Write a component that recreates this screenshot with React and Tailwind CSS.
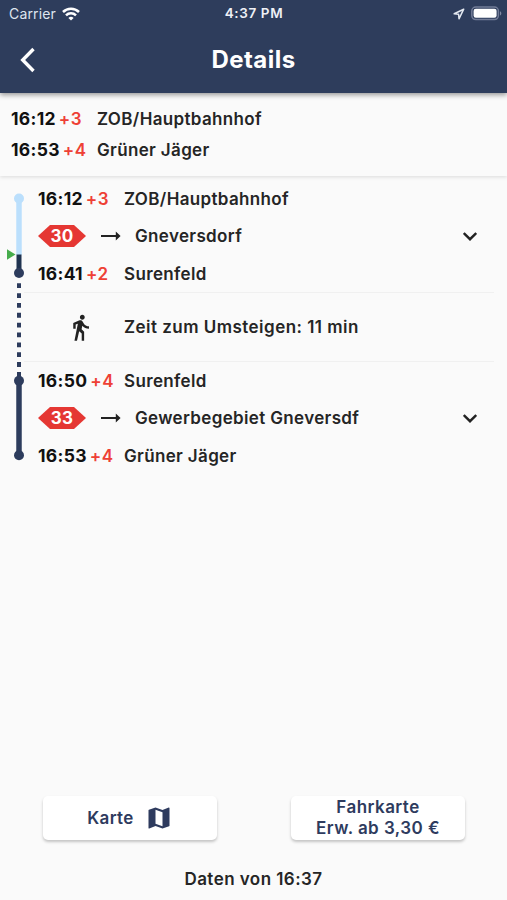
import { MdDirectionsWalk, MdMap } from "react-icons/md";

const legs = [
  {
    line: "30",
    direction: "Gneversdorf",
    from: { time: "16:12", delay: "+3", name: "ZOB/Hauptbahnhof" },
    to: { time: "16:41", delay: "+2", name: "Surenfeld" },
  },
  {
    line: "33",
    direction: "Gewerbegebiet Gneversdf",
    from: { time: "16:50", delay: "+4", name: "Surenfeld" },
    to: { time: "16:53", delay: "+4", name: "Grüner Jäger" },
  },
];

function StatusBar() {
  return (
    <div className="grid h-[27px] grid-cols-3 items-center pr-[5px] pl-[9px] text-[13px] leading-none">
      <div className="flex items-center gap-[6px] text-[#dfe5ef]">
        <span className="text-[14px] tracking-[0.15px]">Carrier</span>
        <svg width="18" height="14" viewBox="0 0 18 14" fill="none" stroke="#fff" strokeWidth="2.5">
          <path d="M1 5a11.4 11.4 0 0 1 16 0" />
          <path d="M4 8.4a7.1 7.1 0 0 1 10 0" />
          <path d="M9 13.6 6.4 10.9a3.8 3.8 0 0 1 5.2 0z" fill="#fff" stroke="none" />
        </svg>
      </div>
      <span className="pr-[3px] text-center text-[13.5px] font-semibold tracking-[0.6px] whitespace-nowrap text-[#eef1f6]">
        4:37 PM
      </span>
      <div className="flex items-center justify-end gap-[6px]">
        <svg width="12" height="12" viewBox="0 0 12 12" fill="none" stroke="#e3e8f0" strokeWidth="1.5" strokeLinejoin="round">
          <path d="M10.7 1.2 1.2 5.8l4.4.5.4 4.5z" />
        </svg>
        <svg width="31" height="15" viewBox="0 0 31 15">
          <rect x="0.8" y="1" width="26.6" height="12.6" rx="4" fill="none" stroke="#727c97" strokeWidth="1.5" />
          <rect x="2.6" y="2.8" width="23" height="9" rx="2.2" fill="#fff" />
          <path d="M29 5.2c1.8.7 1.8 3.6 0 4.300z" fill="#828ba3" />
        </svg>
      </div>
    </div>
  );
}

function Stop({ time, delay, name }) {
  return (
    <>
      <div className="flex w-[86px] shrink-0 items-baseline gap-[3px]">
        <span className="text-[17.5px] font-bold tracking-[0.3px] text-[#111]">{time}</span>
        <span className="tracking-[0.5px] text-[#ee4035]">{delay}</span>
      </div>
      <span>{name}</span>
    </>
  );
}

function Leg({ leg }) {
  return (
    <div>
      <div className="flex h-[37px] items-center pt-px">
        <Stop {...leg.from} />
      </div>
      <div className="flex h-[38px] items-center">
        <div className="flex h-[22px] w-[48px] items-center justify-center bg-[#e53733] font-bold text-white [clip-path:polygon(25%_0,75%_0,100%_50%,75%_100%,25%_100%,0_50%)]">
          {leg.line}
        </div>
        <svg className="ml-[15px]" width="20" height="12" viewBox="0 0 20 12" fill="#222">
          <path d="M0 5.100h14.800V1.600L19.600 6l-4.800 4.400V6.900H0z" />
        </svg>
        <span className="ml-[14px] flex-1">{leg.direction}</span>
        <svg className="mr-[17px]" width="14" height="10" viewBox="0 0 14 10" fill="none" stroke="#222" strokeWidth="2.4">
          <path d="m.8 2 6.2 6.200L13.200 2" />
        </svg>
      </div>
      <div className="flex h-[37px] items-center pt-px">
        <Stop {...leg.to} />
      </div>
    </div>
  );
}

function Timeline() {
  return (
    <svg className="shrink-0" width="38" height="294" viewBox="0 0 38 294">
      {/* first leg: travelled part, then the rest */}
      <path d="M19 19v56" stroke="#bbdffc" strokeWidth="5.5" />
      <circle cx="19" cy="18.5" r="5" fill="#bbdffc" />
      <path d="M19 74.5v19" stroke="#1f3350" strokeWidth="5" />
      <circle cx="19" cy="93" r="5" fill="#2d3c5d" />
      {/* walk */}
      <path d="M19 103.3V197" stroke="#2d3c5d" strokeWidth="4" strokeDasharray="4.8 5.05" />
      {/* second leg */}
      <path d="M19 200v75" stroke="#2d3c5d" strokeWidth="5.5" />
      <circle cx="19" cy="200.7" r="5" fill="#2d3c5d" />
      <circle cx="19" cy="275.3" r="5" fill="#2d3c5d" />
      <path d="M7 69.2v10.6l8.5-5.3z" fill="#46ac4c" />
    </svg>
  );
}

export default function App() {
  return (
    <div className="flex h-[900px] w-[507px] flex-col bg-[#fafafa] font-['Inter',sans-serif] text-[17px] leading-[21px] font-semibold tracking-[0.35px] text-[#252525]">
      <header className="z-10 h-[93px] bg-[#2e3d5c] font-normal text-white shadow-[0_2px_5px_rgba(0,0,0,0.4)]">
        <StatusBar />
        <div className="grid h-[65px] grid-cols-[60px_1fr_60px] items-center">
          <svg className="ml-[20px]" width="16" height="26" viewBox="0 0 16 26" fill="none" stroke="#fff" strokeWidth="3.4">
            <path d="M13.5 2 2.7 13l10.8 11" />
          </svg>
          <h1 className="text-center text-[24px] font-bold tracking-[0.45px]">Details</h1>
        </div>
      </header>

      <section className="h-[83px] pt-[10px] pl-[11px] shadow-[0_1px_4px_rgba(0,0,0,0.13)]">
        <div className="flex h-[31px] items-center pt-px">
          <Stop {...legs[0].from} />
        </div>
        <div className="flex h-[31px] items-center pt-px">
          <Stop {...legs[1].to} />
        </div>
      </section>

      <main className="flex flex-1 items-start pt-[4px]">
        <Timeline />
        <div className="flex-1 pr-[13px]">
          <Leg leg={legs[0]} />
          <div className="-ml-[14px] flex h-[70px] items-center border-y border-[#f0f0f0] pl-[14px]">
            <div className="flex w-[86px] justify-center pr-[2px]">
              <MdDirectionsWalk size={29} color="#222" />
            </div>
            <span className="tracking-[0.47px]">Zeit zum Umsteigen: 11 min</span>
          </div>
          <Leg leg={legs[1]} />
        </div>
      </main>

      <footer className="h-[104px] text-center">
        <div className="flex justify-between px-[42px] pl-[43px] text-[#2e3b5e]">
          <button className="flex h-[44px] w-[174px] items-center justify-center gap-[11px] rounded-[5px] bg-white shadow-[0_2px_3px_rgba(0,0,0,0.22)]">
            Karte
            <MdMap size={28} />
          </button>
          <button className="h-[44px] w-[174px] rounded-[5px] bg-white tracking-[0.45px] shadow-[0_2px_3px_rgba(0,0,0,0.22)]">
            Fahrkarte
            <br />
            Erw. ab 3,30 €
          </button>
        </div>
        <p className="mt-[29px] tracking-[0.45px]">Daten von 16:37</p>
      </footer>
    </div>
  );
}
